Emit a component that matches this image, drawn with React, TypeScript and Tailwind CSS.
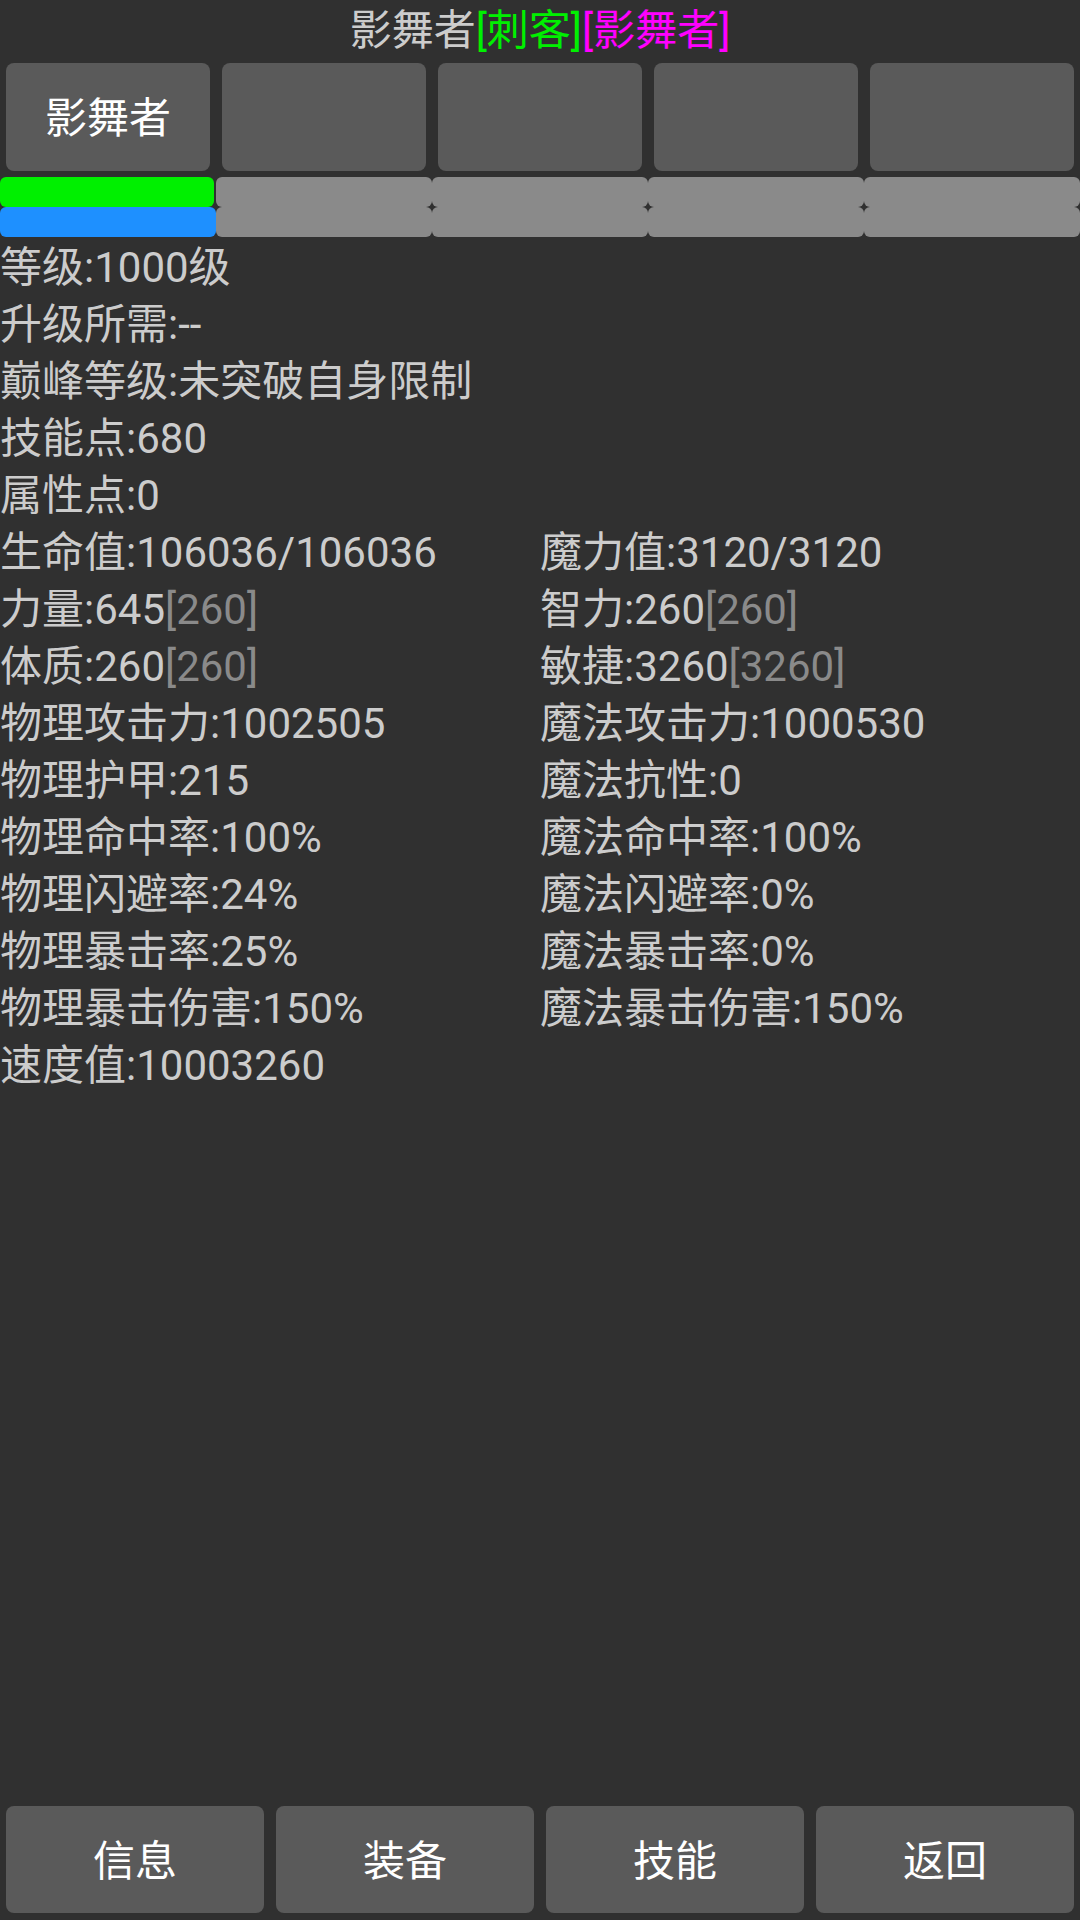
const font = { fontFamily: 'Roboto, "Noto Sans CJK SC", sans-serif' };

const slots = ["影舞者", "", "", "", ""];

const single = [
  "等级:1000级",
  "升级所需:--",
  "巅峰等级:未突破自身限制",
  "技能点:680",
  "属性点:0",
];

type Cell = { label: string; value: string; base?: string };

const pairs: [Cell, Cell][] = [
  [{ label: "生命值", value: "106036/106036" }, { label: "魔力值", value: "3120/3120" }],
  [{ label: "力量", value: "645", base: "260" }, { label: "智力", value: "260", base: "260" }],
  [{ label: "体质", value: "260", base: "260" }, { label: "敏捷", value: "3260", base: "3260" }],
  [{ label: "物理攻击力", value: "1002505" }, { label: "魔法攻击力", value: "1000530" }],
  [{ label: "物理护甲", value: "215" }, { label: "魔法抗性", value: "0" }],
  [{ label: "物理命中率", value: "100%" }, { label: "魔法命中率", value: "100%" }],
  [{ label: "物理闪避率", value: "24%" }, { label: "魔法闪避率", value: "0%" }],
  [{ label: "物理暴击率", value: "25%" }, { label: "魔法暴击率", value: "0%" }],
  [{ label: "物理暴击伤害", value: "150%" }, { label: "魔法暴击伤害", value: "150%" }],
];

const tabs = ["信息", "装备", "技能", "返回"];

function Stat({ cell }: { cell: Cell }) {
  return (
    <div className="whitespace-nowrap">
      {cell.label}:{cell.value}
      {cell.base && <span className="text-[#8a8a8a]">[{cell.base}]</span>}
    </div>
  );
}

export default function App() {
  return (
    <div
      className="flex h-[1920px] w-[1080px] flex-col bg-[#303030] text-[42px] text-[#cccccc]"
      style={font}
    >
      {/* Title */}
      <div className="h-[63px] pt-[2px] text-center leading-[57px]">
        影舞者<span className="text-[#00f000]">[刺客]</span>
        <span className="text-[#ff00ff]">[影舞者]</span>
      </div>

      {/* Party slots */}
      <div className="grid grid-cols-5 gap-[12px] px-[6px]">
        {slots.map((name, i) => (
          <div
            key={i}
            className="flex h-[108px] items-center justify-center rounded-[8px] bg-[#5a5a5a] pt-[2px] text-white"
          >
            {name}
          </div>
        ))}
      </div>

      {/* HP / MP bars */}
      <div className="mt-[6px] grid grid-cols-5">
        {slots.map((_, i) => (
          <div key={i} className="flex flex-col">
            {i === 0 ? (
              <>
                <div className="h-[30px] w-[214px] rounded-[6px] bg-[#00f000]" />
                <div className="h-[30px] rounded-[6px] bg-[#1e90ff]" />
              </>
            ) : (
              <>
                <div className="h-[30px] rounded-[6px] bg-[#8a8a8a]" />
                <div className="h-[30px] rounded-[6px] bg-[#8a8a8a]" />
              </>
            )}
          </div>
        ))}
      </div>

      {/* Stats */}
      <div className="mt-[2px] leading-[57px]">
        {single.map((line) => (
          <div key={line}>{line}</div>
        ))}
        {pairs.map(([a, b]) => (
          <div key={a.label} className="grid grid-cols-2">
            <Stat cell={a} />
            <Stat cell={b} />
          </div>
        ))}
        <div>速度值:10003260</div>
      </div>

      {/* Bottom tabs */}
      <div className="mt-auto grid grid-cols-4 gap-[12px] px-[6px] pb-[7px]">
        {tabs.map((t) => (
          <div
            key={t}
            className="flex h-[107px] items-center justify-center rounded-[8px] bg-[#5a5a5a] pt-[3px] text-white"
          >
            {t}
          </div>
        ))}
      </div>
    </div>
  );
}
